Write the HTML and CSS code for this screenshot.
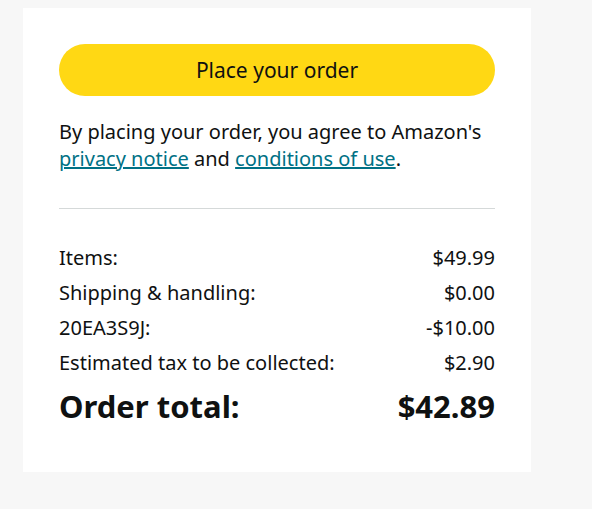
FILE: index.html
```html
<!DOCTYPE html>
<html>
<head>
<meta charset="utf-8">
<link rel="stylesheet" href="styles.css">
</head>
<body>
<div class="card">
  <button class="place-btn">Place your order</button>
  <p class="agree">By placing your order, you agree to Amazon's <a href="#">privacy notice</a> and <a href="#">conditions of use</a>.</p>
  <hr class="divider">
  <div class="summary">
    <div class="row"><span>Items:</span><span>$49.99</span></div>
    <div class="row"><span>Shipping &amp; handling:</span><span>$0.00</span></div>
    <div class="row"><span>20EA3S9J:</span><span>-$10.00</span></div>
    <div class="row"><span>Estimated tax to be collected:</span><span>$2.90</span></div>
    <div class="row total"><span>Order total:</span><span>$42.89</span></div>
  </div>
</div>
</body>
</html>
```
FILE: styles.css
```css
html, body {
  margin: 0;
  padding: 0;
  background: #f7f7f7;
  font-family: "Noto Sans", "Open Sans", sans-serif;
  color: #0f1111;
}
body {
  padding: 8px 0 0 23px;
}
.card {
  width: 508px;
  height: 464px;
  box-sizing: border-box;
  background: #fff;
  padding: 36px;
}
.place-btn {
  display: block;
  width: 100%;
  height: 52px;
  border: none;
  border-radius: 26px;
  background: #ffd814;
  color: #0f1111;
  font-family: inherit;
  font-size: 21px;
  padding: 0;
}
.agree {
  margin: 22px 0 0;
  font-size: 20px;
  line-height: 27px;
}
.agree a {
  color: #007185;
  text-decoration: underline;
}
.divider {
  border: none;
  border-top: 1px solid #d5d9d9;
  margin: 36px 0 0;
}
.summary {
  margin-top: 31px;
}
.row {
  display: flex;
  justify-content: space-between;
  font-size: 20px;
  line-height: 35px;
}
.row.total {
  font-weight: 700;
  font-size: 31px;
  line-height: 52px;
}
```
